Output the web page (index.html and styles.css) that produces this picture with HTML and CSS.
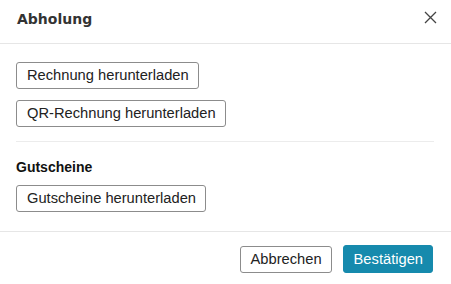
FILE: index.html
```html
<!DOCTYPE html>
<html lang="de">
<head>
<meta charset="utf-8">
<title>Abholung</title>
<link rel="stylesheet" href="styles.css">
</head>
<body>
<div class="dialog">
  <header class="dialog-header">
    <h1 class="dialog-title">Abholung</h1>
    <button class="close" aria-label="Schließen">
      <svg width="13" height="13" viewBox="0 0 13 13"><path d="M1 1L12 12M12 1L1 12" stroke="#444" stroke-width="1.3" fill="none"/></svg>
    </button>
  </header>
  <main class="dialog-body">
    <div class="group">
      <button class="btn">Rechnung herunterladen</button>
      <button class="btn">QR-Rechnung herunterladen</button>
    </div>
    <hr class="sep">
    <h2 class="section-title">Gutscheine</h2>
    <div class="group">
      <button class="btn">Gutscheine herunterladen</button>
    </div>
  </main>
  <footer class="dialog-footer">
    <button class="btn">Abbrechen</button>
    <button class="btn btn-primary">Bestätigen</button>
  </footer>
</div>
</body>
</html>
```
FILE: styles.css
```css
* { box-sizing: border-box; }
html, body { margin: 0; padding: 0; background: #fff; }
.dialog { width: 451px; height: 284px; background: #fff; }
.dialog-header {
  display: flex;
  align-items: flex-start;
  justify-content: space-between;
  padding: 9px 14px 14px 17px;
  border-bottom: 1px solid #e6e6e6;
}
.dialog-title {
  margin: 0;
  font-family: "DejaVu Sans", Verdana, sans-serif;
  font-weight: bold;
  font-size: 14px;
  line-height: 20px;
  color: #333;
}
.close {
  margin-top: 2px;
  padding: 0;
  border: 0;
  background: none;
  width: 13px;
  height: 13px;
  display: flex;
}
.dialog-body {
  padding: 18px 17px 19px 16px;
  border-bottom: 1px solid #e6e6e6;
}
.group {
  display: flex;
  flex-direction: column;
  align-items: flex-start;
  gap: 11px;
}
.sep {
  margin: 14px 0 0;
  border: 0;
  border-top: 1px solid #ececec;
  height: 0;
}
.section-title {
  margin: 17px 0 10px;
  font-family: "Liberation Sans", Arial, sans-serif;
  font-weight: bold;
  font-size: 14px;
  line-height: 16px;
  color: #111;
}
.btn {
  font-family: "Liberation Sans", Arial, sans-serif;
  font-size: 14.7px;
  line-height: 17px;
  padding: 4px 9px 4px 10px;
  border: 1px solid #8c8c8c;
  border-radius: 3px;
  background: #fff;
  color: #222;
  margin: 0;
}
.dialog-footer {
  display: flex;
  justify-content: flex-end;
  gap: 11px;
  padding: 14px 18px 0 0;
}
.dialog-footer .btn { height: 27px; }
.btn-primary {
  background: #168aad;
  border-color: #168aad;
  color: #fff;
  height: 28px !important;
  margin-top: -1px;
}
```
